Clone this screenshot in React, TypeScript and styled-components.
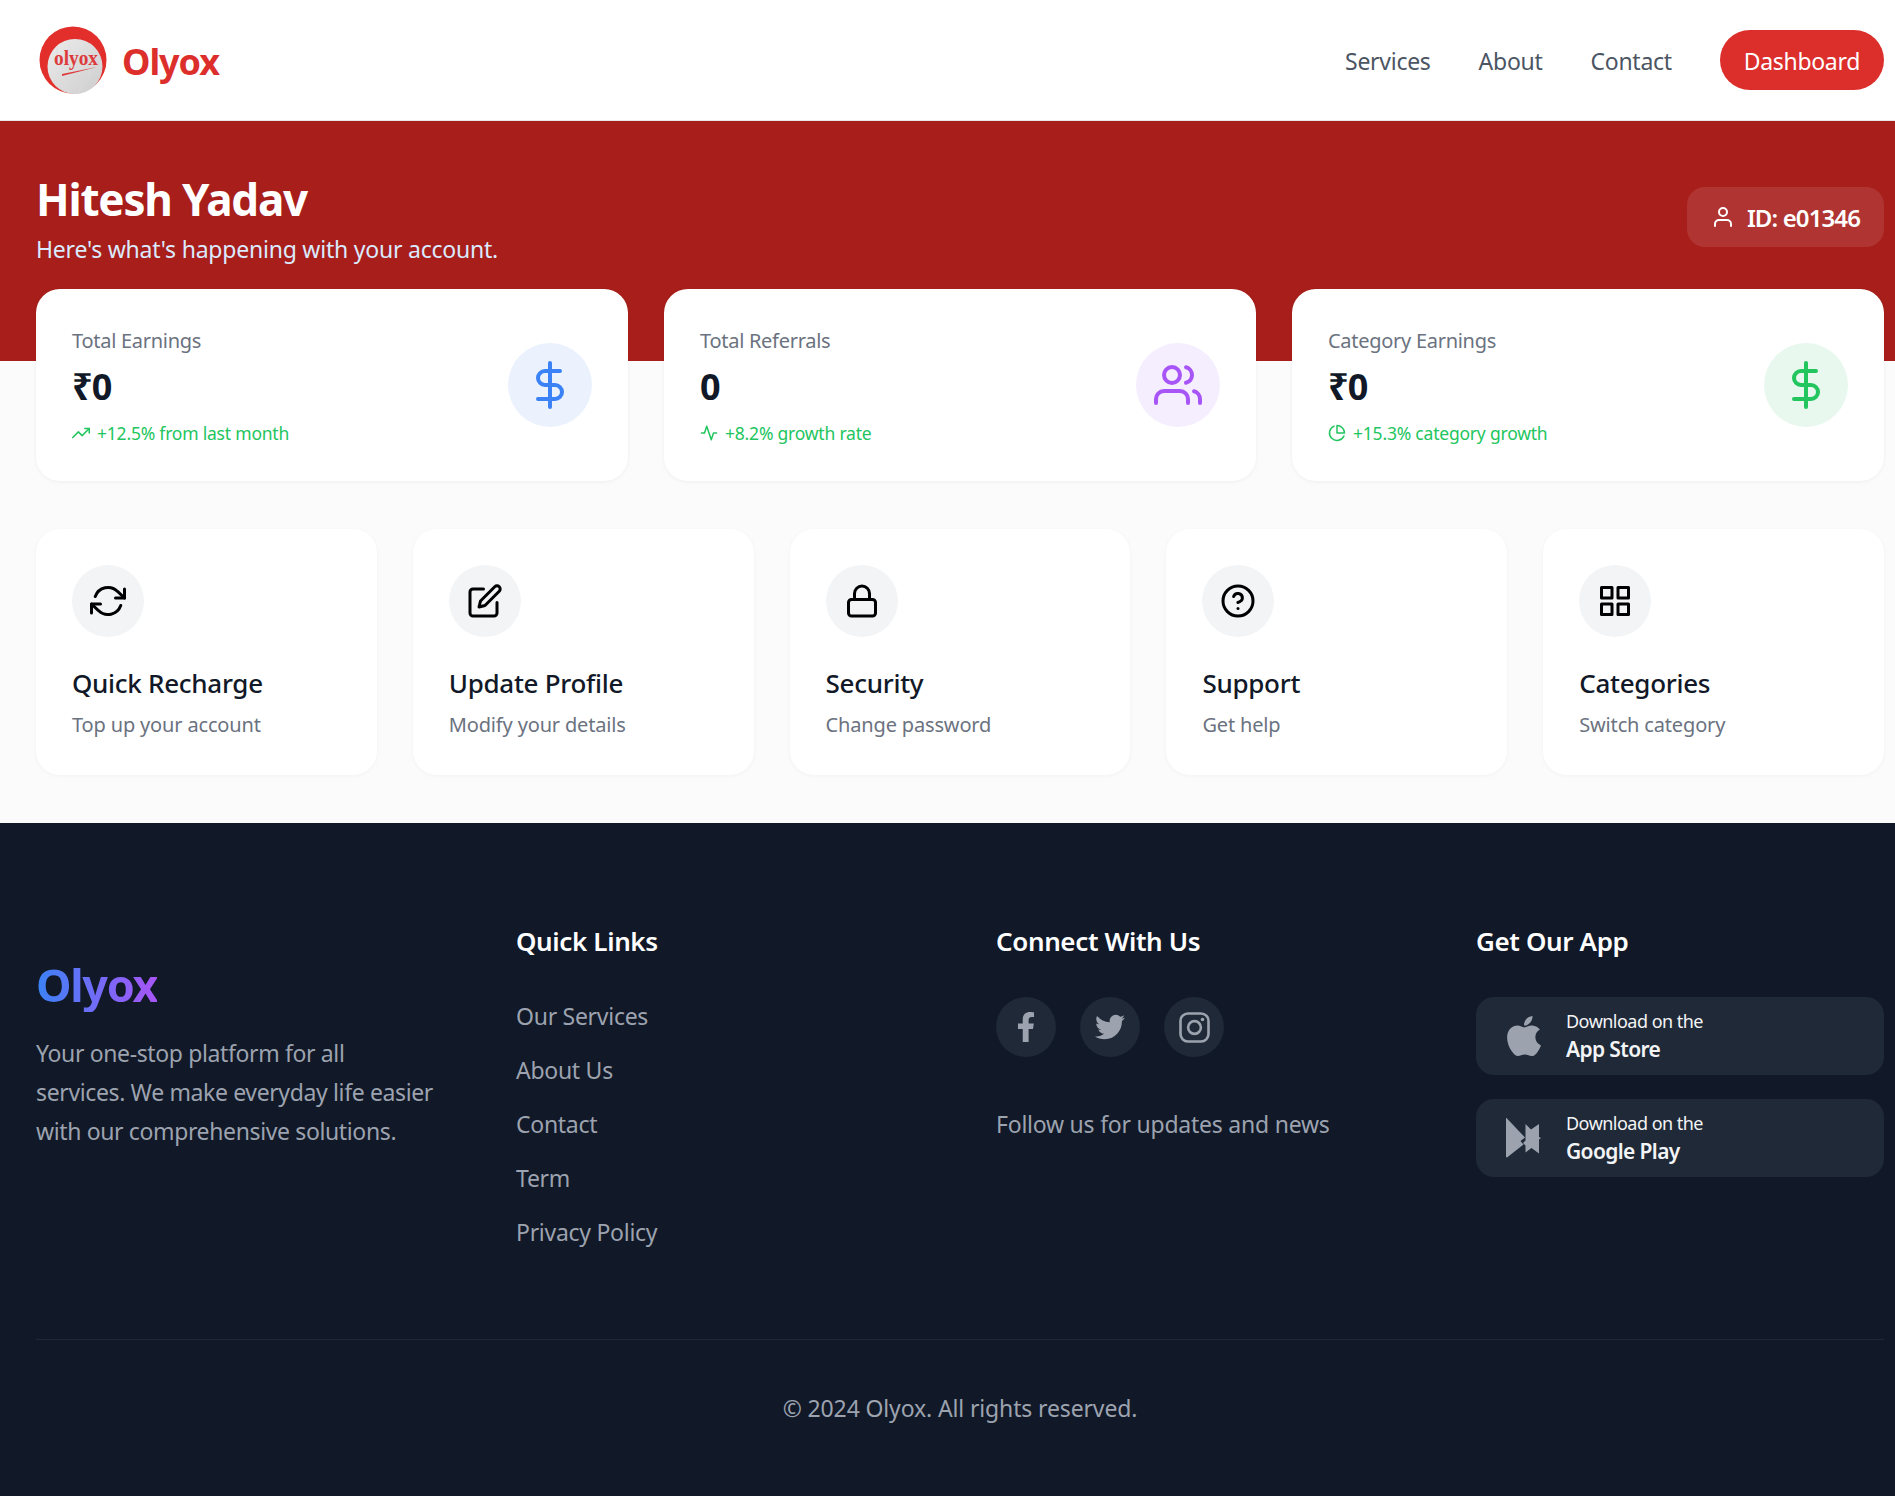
import React from "react";
import styled, { createGlobalStyle } from "styled-components";
import {
  FiActivity, FiDollarSign, FiEdit, FiGrid, FiHelpCircle, FiLock, FiPieChart,
  FiRefreshCw, FiTrendingUp, FiUser, FiUsers,
} from "react-icons/fi";
import { FaApple, FaFacebookF, FaTwitter } from "react-icons/fa";

const Global = createGlobalStyle`
  html, body { margin: 0; padding: 0; background: #fbfbfb; }
  body { font-family: "Noto Sans", "Open Sans", sans-serif; color: #111827; }
  * { box-sizing: border-box; }
  p, h1, h2, h3, h4, ul { margin: 0; padding: 0; }
  ul { list-style: none; }
  a { color: inherit; text-decoration: none; }
`;

const Page = styled.div`
  width: 1895px;
  height: 1496px;
  overflow: hidden;
`;
const Nav = styled.nav`
  height: 121px;
  background: #fff;
  border-bottom: 1px solid #e5e7eb;
  padding: 0 11px 0 39px;
  display: flex;
  align-items: center;
  justify-content: space-between;
`;
const Brand = styled.div`
  display: flex;
  align-items: center;
  gap: 15px;
`;
const BrandName = styled.span`
  padding-top: 3px;
  font-size: 36px;
  font-weight: 700;
  letter-spacing: -0.03em;
  color: #dc2f2c;
`;
const NavLinks = styled.div`
  display: flex;
  align-items: center;
  gap: 48px;
`;
const NavLink = styled.a`
  padding-top: 2px;
  font-size: 23px;
  line-height: 36px;
  letter-spacing: -0.012em;
  color: #4b5563;
`;
const DashButton = styled.a`
  height: 60px;
  padding: 2px 24px 0;
  display: flex;
  align-items: center;
  border-radius: 30px;
  background: #dc2f2c;
  color: #fff;
  font-size: 23px;
  letter-spacing: -0.014em;
`;
const Hero = styled.section`
  height: 240px;
  background: #a81e1b;
  padding: 48px 11px 0 36px;
  display: flex;
  align-items: flex-start;
  justify-content: space-between;
`;
const Greeting = styled.h1`
  font-size: 44px;
  line-height: 60px;
  font-weight: 700;
  letter-spacing: -0.027em;
  color: #fff;
`;
const HeroSub = styled.p`
  margin-top: 2px;
  font-size: 23px;
  line-height: 36px;
  letter-spacing: -0.0095em;
  color: #dbeafe;
`;
const IdBadge = styled.div`
  margin-top: 18px;
  height: 60px;
  padding: 0 24px;
  display: flex;
  align-items: center;
  gap: 12px;
  border-radius: 18px;
  background: rgba(255, 255, 255, 0.1);
  color: #fff;
  font-size: 24px;
  font-weight: 600;
  letter-spacing: -0.037em;
`;
const Main = styled.main`
  padding: 0 11px 0 36px;
`;
const StatGrid = styled.div`
  display: grid;
  grid-template-columns: repeat(3, 1fr);
  gap: 36px;
  margin-top: -72px;
`;
const StatCard = styled.div`
  height: 192px;
  padding: 36px;
  background: #fff;
  border-radius: 24px;
  box-shadow: 0 1px 4px rgba(0, 0, 0, 0.05);
  display: flex;
  align-items: center;
  justify-content: space-between;
`;
const StatLabel = styled.p`
  padding-top: 1px;
  font-size: 20px;
  line-height: 30px;
  letter-spacing: -0.014em;
  color: #6b7280;
`;
const StatValue = styled.p`
  margin-top: 7px;
  font-size: 36px;
  line-height: 48px;
  font-weight: 700;
  letter-spacing: -0.02em;
  color: #111827;
`;
const StatNote = styled.p`
  margin-top: 10px;
  font-size: 17.5px;
  line-height: 24px;
  letter-spacing: -0.012em;
  color: #22c55e;
  display: flex;
  align-items: center;
  gap: 7px;
`;
const StatIcon = styled.div<{ $bg: string; $fg: string }>`
  width: 84px;
  height: 84px;
  border-radius: 50%;
  background: ${(p) => p.$bg};
  color: ${(p) => p.$fg};
  display: flex;
  align-items: center;
  justify-content: center;
`;
const ActionGrid = styled.div`
  display: grid;
  grid-template-columns: repeat(5, 1fr);
  gap: 36px;
  margin-top: 48px;
`;
const ActionCard = styled.div`
  height: 246px;
  padding: 36px;
  background: #fff;
  border-radius: 24px;
  box-shadow: 0 1px 4px rgba(0, 0, 0, 0.04);
`;
const ActionIcon = styled.div`
  width: 72px;
  height: 72px;
  border-radius: 50%;
  background: #f3f4f6;
  color: #000;
  display: flex;
  align-items: center;
  justify-content: center;
  margin-bottom: 25px;
`;
const ActionTitle = styled.h3`
  font-size: 26px;
  line-height: 42px;
  font-weight: 500;
  letter-spacing: -0.011em;
  color: #111827;
`;
const ActionDesc = styled.p`
  margin-top: 6px;
  font-size: 20px;
  line-height: 30px;
  letter-spacing: -0.008em;
  color: #6b7280;
`;
const Footer = styled.footer`
  margin-top: 48px;
  height: 673px;
  background: #111827;
  padding: 96px 11px 0 36px;
`;
const FooterGrid = styled.div`
  display: grid;
  grid-template-columns: repeat(4, 1fr);
  gap: 72px;
  height: 330px;
`;
const BrandCol = styled.div`
  padding-top: 39px;
`;
const FooterBrand = styled.h2`
  font-size: 45px;
  line-height: 54px;
  font-weight: 700;
  letter-spacing: -0.03em;
  margin-bottom: 22px;
  width: fit-content;
  color: transparent;
  background: linear-gradient(90deg, #3b82f6, #a855f7);
  -webkit-background-clip: text;
  background-clip: text;
`;
const BrandText = styled.p`
  font-size: 23px;
  line-height: 39px;
  letter-spacing: -0.016em;
  white-space: nowrap;
  color: #9ca3af;
`;
const FooterText = styled.p`
  font-size: 23px;
  line-height: 39px;
  letter-spacing: -0.01em;
  color: #9ca3af;
`;
const FooterHeading = styled.h4`
  padding-top: 1px;
  font-size: 26px;
  line-height: 42px;
  font-weight: 600;
  letter-spacing: -0.014em;
  color: #fff;
  margin-bottom: 35px;
`;
const LinkList = styled.ul`
  margin-top: 36px;
  display: flex;
  flex-direction: column;
  gap: 18px;
`;
const FooterLink = styled.a`
  display: block;
  font-size: 23px;
  line-height: 36px;
  letter-spacing: -0.012em;
  color: #9ca3af;
`;
const SocialRow = styled.div`
  display: flex;
  gap: 24px;
  margin-bottom: 48px;
`;
const SocialButton = styled.a`
  width: 60px;
  height: 60px;
  border-radius: 50%;
  background: #1f2937;
  color: #9ca3af;
  display: flex;
  align-items: center;
  justify-content: center;
  font-size: 30px;
`;
const AppStack = styled.div`
  display: flex;
  flex-direction: column;
  gap: 24px;
`;
const AppButton = styled.a`
  height: 78px;
  padding: 0 30px;
  border-radius: 18px;
  background: #1f2937;
  display: flex;
  align-items: center;
  gap: 24px;
`;
const AppGlyph = styled.div`
  flex: 0 0 36px;
  width: 36px;
  min-width: 0;
  height: 36px;
  color: #9ca3af;
  display: flex;
  align-items: center;
  justify-content: center;
  font-size: 46px;
  svg { flex-shrink: 0; }
`;
const AppSmall = styled.div`
  font-size: 18px;
  line-height: 24px;
  letter-spacing: -0.029em;
  color: #f3f4f6;
`;
const AppBig = styled.div`
  margin-top: 1px;
  font-size: 21px;
  line-height: 30px;
  font-weight: 600;
  letter-spacing: -0.03em;
  color: #f3f4f6;
`;
const Copyright = styled.div`
  margin-top: 90px;
  border-top: 1px solid #1f2937;
  padding-top: 50px;
  text-align: center;
  font-size: 23px;
  line-height: 36px;
  letter-spacing: -0.006em;
  color: #9ca3af;
`;

const Logo = () => (
  <svg width="68" height="68" viewBox="0 0 68 68">
    <defs>
      <linearGradient id="ball" x1="0" y1="0" x2="1" y2="1">
        <stop offset="0" stopColor="#ececec" />
        <stop offset="1" stopColor="#cdcdcd" />
      </linearGradient>
    </defs>
    <circle cx="34" cy="34" r="33.5" fill="#e32f2b" />
    <circle cx="36" cy="40.5" r="27.5" fill="url(#ball)" />
    <g fill="none" stroke="#dedede" strokeWidth="0.7">
      <path d="M18 20v10l6 5v12l-5 5M30 14v9l7 5v10M46 16v8l-9 4M55 26v10l-5 5v12M26 58l5 8M44 58l-4 8" />
    </g>
    <text x="37" y="39" textAnchor="middle" textLength="44" lengthAdjust="spacingAndGlyphs" fontFamily="'Liberation Serif', serif" fontWeight="700" fontSize="22" fill="#dd3a3c">olyox</text>
    <path d="M23 48 L58 41 L23 50 Z" fill="#dd3a3c" />
  </svg>
);

const PlayGlyph = () => (
  <svg width="40" height="44" viewBox="8.5 6 40 44" fill="#9ca3af">
    <path d="M10.5 8 L11 8 L29.5 27.5 L25 31 L28 34.5 L11.5 47.5 L10.5 47 Z" />
    <path d="M30 14 L35.5 19.5 L43.5 14 L43.5 27 L45.5 28 L43.5 29.5 L43.5 43.5 L36 38 L30 42.5 L30 35.5 L27.5 33 L30 30.5 Z" />
  </svg>
);

const InstagramGlyph = () => (
  <svg width="31" height="31" viewBox="0 0 31 31" fill="none" stroke="currentColor" strokeWidth="2.6">
    <rect x="1.5" y="1.5" width="28" height="28" rx="7.5" />
    <circle cx="15.5" cy="15.5" r="6.4" />
    <circle cx="23.5" cy="7.5" r="1.8" fill="currentColor" stroke="none" />
  </svg>
);

const stats = [
  { label: "Total Earnings", value: "₹0", note: "+12.5% from last month", Note: FiTrendingUp, bg: "#ebf2fe", fg: "#3b82f6", Icon: FiDollarSign },
  { label: "Total Referrals", value: "0", note: "+8.2% growth rate", Note: FiActivity, bg: "#f5eeff", fg: "#a855f7", Icon: FiUsers },
  { label: "Category Earnings", value: "₹0", note: "+15.3% category growth", Note: FiPieChart, bg: "#e8f8ef", fg: "#22c55e", Icon: FiDollarSign },
];
const actions = [
  { title: "Quick Recharge", desc: "Top up your account", Icon: FiRefreshCw },
  { title: "Update Profile", desc: "Modify your details", Icon: FiEdit },
  { title: "Security", desc: "Change password", Icon: FiLock },
  { title: "Support", desc: "Get help", Icon: FiHelpCircle },
  { title: "Categories", desc: "Switch category", Icon: FiGrid },
];
const links = ["Our Services", "About Us", "Contact", "Term", "Privacy Policy"];

export default function App() {
  return (
    <Page>
      <Global />
      <Nav>
        <Brand>
          <Logo />
          <BrandName>Olyox</BrandName>
        </Brand>
        <NavLinks>
          <NavLink>Services</NavLink>
          <NavLink>About</NavLink>
          <NavLink>Contact</NavLink>
          <DashButton>Dashboard</DashButton>
        </NavLinks>
      </Nav>
      <Hero>
        <div>
          <Greeting>Hitesh Yadav</Greeting>
          <HeroSub>Here's what's happening with your account.</HeroSub>
        </div>
        <IdBadge>
          <FiUser size={24} />
          ID: e01346
        </IdBadge>
      </Hero>
      <Main>
        <StatGrid>
          {stats.map((s) => (
            <StatCard key={s.label}>
              <div>
                <StatLabel>{s.label}</StatLabel>
                <StatValue>{s.value}</StatValue>
                <StatNote>
                  <s.Note size={18} />
                  {s.note}
                </StatNote>
              </div>
              <StatIcon $bg={s.bg} $fg={s.fg}>
                <s.Icon size={48} />
              </StatIcon>
            </StatCard>
          ))}
        </StatGrid>
        <ActionGrid>
          {actions.map((a) => (
            <ActionCard key={a.title}>
              <ActionIcon>
                <a.Icon size={36} />
              </ActionIcon>
              <ActionTitle>{a.title}</ActionTitle>
              <ActionDesc>{a.desc}</ActionDesc>
            </ActionCard>
          ))}
        </ActionGrid>
      </Main>
      <Footer>
        <FooterGrid>
          <BrandCol>
            <FooterBrand>Olyox</FooterBrand>
            <BrandText>
              Your one-stop platform for all
              <br />
              services. We make everyday life easier
              <br />
              with our comprehensive solutions.
            </BrandText>
          </BrandCol>
          <div>
            <FooterHeading>Quick Links</FooterHeading>
            <LinkList>
              {links.map((l) => (
                <li key={l}>
                  <FooterLink>{l}</FooterLink>
                </li>
              ))}
            </LinkList>
          </div>
          <div>
            <FooterHeading>Connect With Us</FooterHeading>
            <SocialRow>
              <SocialButton><FaFacebookF /></SocialButton>
              <SocialButton><FaTwitter /></SocialButton>
              <SocialButton><InstagramGlyph /></SocialButton>
            </SocialRow>
            <FooterText>Follow us for updates and news</FooterText>
          </div>
          <div>
            <FooterHeading>Get Our App</FooterHeading>
            <AppStack>
              <AppButton>
                <AppGlyph><FaApple /></AppGlyph>
                <div>
                  <AppSmall>Download on the</AppSmall>
                  <AppBig>App Store</AppBig>
                </div>
              </AppButton>
              <AppButton>
                <AppGlyph><PlayGlyph /></AppGlyph>
                <div>
                  <AppSmall>Download on the</AppSmall>
                  <AppBig>Google Play</AppBig>
                </div>
              </AppButton>
            </AppStack>
          </div>
        </FooterGrid>
        <Copyright>© 2024 Olyox. All rights reserved.</Copyright>
      </Footer>
    </Page>
  );
}
